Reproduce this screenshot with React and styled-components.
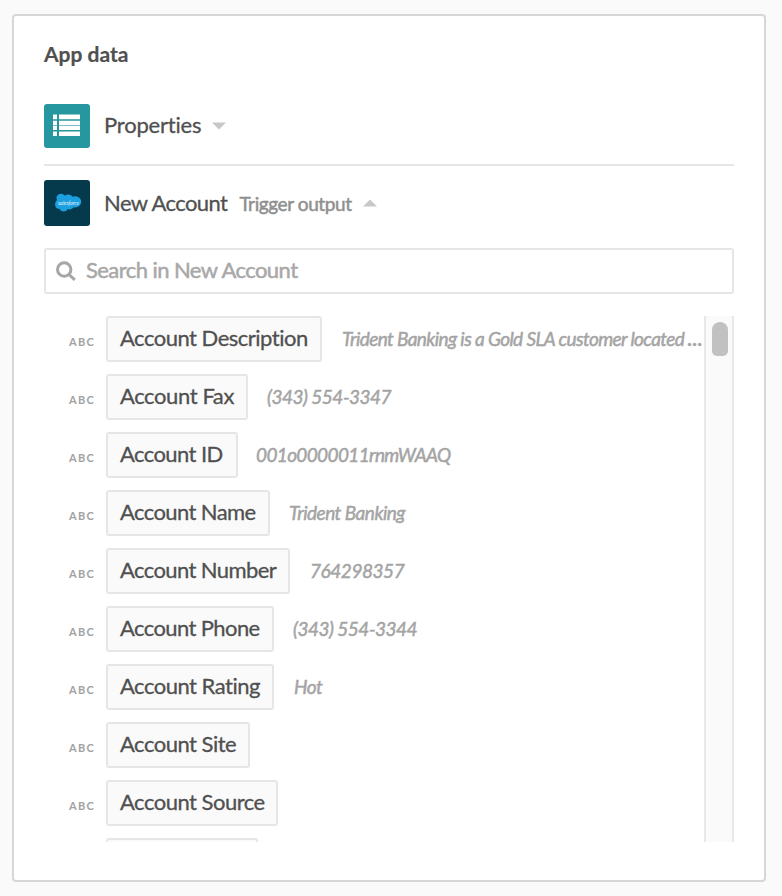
import React from "react";
import styled, { createGlobalStyle } from "styled-components";

const Global = createGlobalStyle`
  * { box-sizing: border-box; }
  body { margin: 0; background: #fafafa; font-family: Lato, sans-serif; color: #505050; }
`;

const Page = styled.main`
  height: 896px;
  padding: 14px 16px 14px 12px;
  overflow: hidden;
`;

const Card = styled.section`
  height: 868px;
  padding: 0 30px;
  background: #fff;
  border: 2px solid #d7d7d7;
  border-radius: 4px;
`;

const Title = styled.h1`
  margin: 0;
  padding-top: 23px;
  height: 88px;
  font-size: 21px;
  line-height: 30px;
  font-weight: 700;
  -webkit-text-stroke: 0.2px currentColor;
`;

const Source = styled.header`
  display: flex;
  align-items: center;
  height: ${(p) => p.$height}px;
`;

const Divider = styled.hr`
  height: 2px;
  margin: 16px 0 14px;
  border: 0;
  background: #e6e6e6;
`;

const Tile = styled.div`
  display: flex;
  width: 46px;
  height: 100%;
  border-radius: 3px;
  background: ${(p) => p.$color};
`;

const SourceName = styled.span`
  margin-left: 14px;
  padding-bottom: ${(p) => p.$lift || 0}px;
  font-size: 22px;
  line-height: 30px;
  letter-spacing: ${(p) => p.$spacing}px;
  -webkit-text-stroke: 0.3px currentColor;
`;

const SourceNote = styled.span`
  margin: 2px 0 0 12px;
  font-size: 19px;
  line-height: 26px;
  letter-spacing: -0.4px;
  color: #8f8f8f;
  -webkit-text-stroke: 0.5px currentColor;
`;

const Caret = styled.svg`
  display: block;
  width: 14px;
  height: 8px;
  margin-left: 11px;
  fill: #c8c8c8;
`;

const Search = styled.label`
  display: flex;
  align-items: center;
  height: 46px;
  margin-top: 22px;
  padding-left: 10px;
  border: 2px solid #e6e6e6;
  border-radius: 3px;
`;

const SearchInput = styled.input`
  flex: 1;
  height: 40px;
  margin-left: 10px;
  padding: 0 0 3px;
  border: 0;
  outline: 0;
  background: transparent;
  font: 22px Lato, sans-serif;
  letter-spacing: -0.56px;
  -webkit-text-stroke: 0.5px #a8a8a8;
  &::placeholder { color: #a8a8a8; opacity: 1; }
`;

const Results = styled.div`
  display: flex;
  height: 526px;
  margin-top: 22px;
  overflow: hidden;
`;

const Fields = styled.ul`
  flex: 1;
  min-width: 0;
  display: flex;
  flex-direction: column;
  gap: 12px;
  margin: 0;
  padding: 0 0 0 25px;
  list-style: none;
`;

const Field = styled.li`
  display: flex;
  flex: none;
  height: 46px;
`;

const Kind = styled.span`
  flex: none;
  width: 37px;
  padding-top: 18px;
  font-size: 11px;
  line-height: 16px;
  font-weight: 700;
  letter-spacing: 1.3px;
  color: #a2a2a2;
`;

const Pill = styled.button`
  flex: none;
  width: ${(p) => p.$width}px;
  padding: 0 0 3px 12px;
  border: 2px solid #e6e6e6;
  border-radius: 3px;
  background: #fafafa;
  color: #505050;
  font: 22px Lato, sans-serif;
  letter-spacing: ${(p) => p.$spacing ?? -0.5}px;
  text-align: left;
  white-space: nowrap;
  -webkit-text-stroke: 0.3px currentColor;
`;

const SampleCell = styled.div`
  display: flex;
  align-items: baseline;
  flex: 1;
  min-width: 0;
  height: 36px;
  padding: 10px 0 0 ${(p) => p.$gap ?? 19}px;
  white-space: nowrap;
  line-height: 26px;
  color: #a4a4a4;
  -webkit-text-stroke: 0.5px currentColor;
`;

const Sample = styled.em`
  font-size: 19px;
  letter-spacing: ${(p) => p.$spacing ?? -0.5}px;
`;

const More = styled.span`
  margin-left: 3px;
  font-size: 19px;
  line-height: 20px;
  font-weight: 700;
`;

const Track = styled.div`
  flex: none;
  width: 30px;
  padding: 6px 6px 0;
  border: solid #e8e8e8;
  border-width: 0 2px;
  background: #fafafa;
`;

const Thumb = styled.div`
  width: 16px;
  height: 34px;
  border-radius: 8px 8px 5px 5px;
  background: #c1c1c1;
`;

const ListIcon = () => (
  <svg width="46" height="44" viewBox="0 0 46 44">
    <g fill="#8fcace">
      {[10, 15.5, 21.200, 27].map((y) => (
        <React.Fragment key={y}>
          <rect x="9" y={y} width="4" height="1" />
          <rect x="15" y={y} width="21" height="1" />
        </React.Fragment>
      ))}
    </g>
    <g fill="#fff">
      {[11, 17, 22, 28].map((y) => (
        <React.Fragment key={y}>
          <rect x="9" y={y} width="4" height="4" />
          <rect x="15" y={y} width="21" height="4" />
        </React.Fragment>
      ))}
    </g>
  </svg>
);

const CloudIcon = () => (
  <svg width="46" height="46" viewBox="0 0 46 46">
    <path
      fill="#1b9fdf"
      d="M13 20c-1.600-3 .6-6.200 4-6.200 1.800 0 3.200 1 4 2 2-2 6-1.800 7.300 1 4-1.700 8.900.8 8.900 5 0 4-4.200 6.400-7.700 5.500-1.300 2-3.600 2.700-5.800 1.600-1.600 3.400-6.800 3.400-8.300-.2-2.600.4-4.300-1.500-4.300-4 0-1.700.6-3.700 1.900-4.700z"
    />
    <text x="24.500" y="25" fill="#fff" fontFamily="Liberation Serif, serif" fontStyle="italic" fontSize="7" textAnchor="middle" textLength="21" lengthAdjust="spacingAndGlyphs">
      salesforce
    </text>
  </svg>
);

const SearchIcon = () => (
  <svg width="20" height="20" viewBox="0 0 20 20" fill="none" stroke="#a6a6a6" strokeWidth="3">
    <circle cx="8.200" cy="8.500" r="6.700" />
    <path d="M13 13.500l5.800 5.300" />
  </svg>
);

const fields = [
  { name: "Account Description", width: 216, sample: "Trident Banking is a Gold SLA customer located", more: true, gap: 20, sampleSpacing: -0.6 },
  { name: "Account Fax", width: 142, spacing: -0.4, sample: "(343) 554-3347" },
  { name: "Account ID", width: 132, spacing: -0.58, sample: "001o0000011rnmWAAQ", sampleSpacing: -0.64, gap: 18 },
  { name: "Account Name", width: 164, spacing: -0.6, sample: "Trident Banking" },
  { name: "Account Number", width: 184, spacing: -0.6, sample: "764298357", gap: 20, sampleSpacing: -0.45 },
  { name: "Account Phone", width: 168, spacing: -0.6, sample: "(343) 554-3344" },
  { name: "Account Rating", width: 168, sample: "Hot", gap: 20 },
  { name: "Account Site", width: 144 },
  { name: "Account Source", width: 172 },
  { name: "Account Type", width: 152 },
];

export default function App() {
  return (
    <Page>
      <Global />
      <Card>
        <Title>App data</Title>
        <Source $height={44}>
          <Tile $color="#27979f"><ListIcon /></Tile>
          <SourceName $spacing={-0.2} $lift={2}>Properties</SourceName>
          <Caret viewBox="0 0 14 8"><path d="M0 0.500h14L7 7.500z" /></Caret>
        </Source>
        <Divider />
        <Source $height={46}>
          <Tile $color="#043a4c"><CloudIcon /></Tile>
          <SourceName $spacing={-0.57}>New Account</SourceName>
          <SourceNote>Trigger output</SourceNote>
          <Caret viewBox="0 0 14 8"><path d="M0 7.500h14L7 .5z" /></Caret>
        </Source>
        <Search>
          <SearchIcon />
          <SearchInput placeholder="Search in New Account" />
        </Search>
        <Results>
          <Fields>
            {fields.map((f) => (
              <Field key={f.name}>
                <Kind>ABC</Kind>
                <Pill $width={f.width} $spacing={f.spacing}>{f.name}</Pill>
                {f.sample && (
                  <SampleCell $gap={f.gap}>
                    <Sample $spacing={f.sampleSpacing}>{f.sample}</Sample>
                    {f.more && <More>…</More>}
                  </SampleCell>
                )}
              </Field>
            ))}
          </Fields>
          <Track><Thumb /></Track>
        </Results>
      </Card>
    </Page>
  );
}
